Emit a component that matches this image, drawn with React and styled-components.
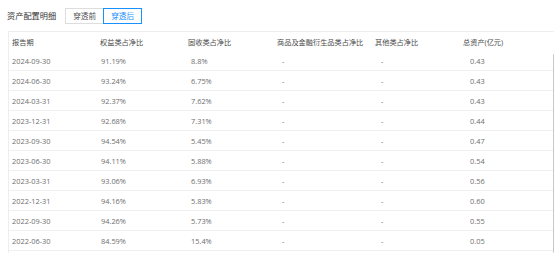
import React, { useState } from 'react';
import styled, { createGlobalStyle } from 'styled-components';

const GlobalStyle = createGlobalStyle`
  html, body {
    margin: 0;
    padding: 0;
    background: #fff;
    font-family: "Open Sans", "Noto Sans CJK SC", sans-serif;
    overflow: hidden;
  }
`;

const Page = styled.div`
  width: 554px;
  height: 253px;
  display: flex;
  flex-direction: column;
  overflow: hidden;
`;

const Toolbar = styled.div`
  display: flex;
  align-items: center;
  height: 16px;
  padding: 8px 0 0 7px;
  gap: 8px;
`;

const Title = styled.h3`
  margin: 0;
  font-size: 8.2px;
  font-weight: 400;
  color: #333;
  line-height: 16px;
  white-space: nowrap;
`;

const Toggle = styled.div`
  display: flex;
  margin-left: 1px;
`;

const ToggleButton = styled.button`
  width: 39px;
  height: 16px;
  padding: 0;
  font-family: inherit;
  font-size: 7.6px;
  line-height: 14px;
  background: #fff;
  color: ${p => (p.active ? '#1890ff' : '#555')};
  border: 1px solid ${p => (p.active ? '#1890ff' : '#ddd')};
  margin-left: ${p => (p.active ? '-1px' : '0')};
  position: relative;
  z-index: ${p => (p.active ? 1 : 0)};
  cursor: pointer;
`;

const TableWrap = styled.div`
  margin: 7px 0 0 8px;
  width: 546px;
  border-top: 1px solid #eee;
  border-left: 1px solid #eee;
  position: relative;
  flex: 1;
  overflow: hidden;
`;

const Scrollbar = styled.div`
  position: absolute;
  right: 0;
  top: 22px;
  bottom: 0;
  width: 2px;
  background: #c8c8c8;
  border-radius: 1px;
`;

const Row = styled.div`
  display: grid;
  grid-template-columns: 88px 88px 89px 98px 88px 1fr;
  height: ${p => (p.head ? '19px' : '20px')};
  align-items: center;
  border-bottom: ${p => (p.head ? 'none' : '1px solid #f0f0f0')};
  box-sizing: border-box;
`;

const HeadCell = styled.div`
  padding-left: 3px;
  font-size: 7.2px;
  color: #4a4a4a;
  white-space: nowrap;
`;

const Cell = styled.div`
  padding-left: ${p => 3 + p.shift}px;
  font-size: 7.4px;
  color: #6e6e6e;
  white-space: nowrap;
`;

const headers = ['报告期', '权益类占净比', '固收类占净比', '商品及金融衍生品类占净比', '其他类占净比', '总资产(亿元)'];
const shifts = [0, 1, 3, 5, 6, 7];

const rows = [
  ['2024-09-30', '91.19%', '8.8%', '-', '-', '0.43'],
  ['2024-06-30', '93.24%', '6.75%', '-', '-', '0.43'],
  ['2024-03-31', '92.37%', '7.62%', '-', '-', '0.43'],
  ['2023-12-31', '92.68%', '7.31%', '-', '-', '0.44'],
  ['2023-09-30', '94.54%', '5.45%', '-', '-', '0.47'],
  ['2023-06-30', '94.11%', '5.88%', '-', '-', '0.54'],
  ['2023-03-31', '93.06%', '6.93%', '-', '-', '0.56'],
  ['2022-12-31', '94.16%', '5.83%', '-', '-', '0.60'],
  ['2022-09-30', '94.26%', '5.73%', '-', '-', '0.55'],
  ['2022-06-30', '84.59%', '15.4%', '-', '-', '0.05'],
];

export default function App() {
  const [mode, setMode] = useState('after');
  return (
    <Page>
      <GlobalStyle />
      <Toolbar>
        <Title>资产配置明细</Title>
        <Toggle>
          <ToggleButton active={mode === 'before'} onClick={() => setMode('before')}>穿透前</ToggleButton>
          <ToggleButton active={mode === 'after'} onClick={() => setMode('after')}>穿透后</ToggleButton>
        </Toggle>
      </Toolbar>
      <TableWrap>
        <Row head>
          {headers.map(h => <HeadCell key={h}>{h}</HeadCell>)}
        </Row>
        {rows.map(r => (
          <Row key={r[0]}>
            {r.map((v, i) => <Cell key={i} shift={shifts[i]}>{v}</Cell>)}
          </Row>
        ))}
        <Scrollbar />
      </TableWrap>
    </Page>
  );
}
